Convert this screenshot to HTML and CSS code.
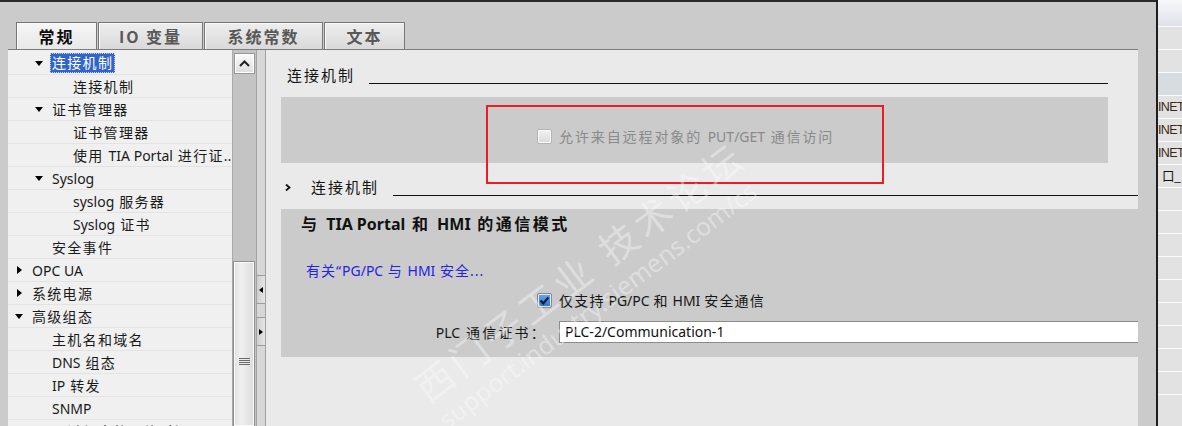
FILE: index.html
```html
<!DOCTYPE html>
<html lang="zh-CN">
  <head>
    <meta charset="UTF-8" />
    <title>常规 - 连接机制</title>
    <link rel="stylesheet" href="styles.css">
  </head>
  <body>
    <div class="window">
      <div class="editor">
        <div class="tabs">
          <div class="tab active">常规</div>
          <div class="tab wide">IO 变量</div>
          <div class="tab wider">系统常数</div>
          <div class="tab">文本</div>
        </div>

        <div class="panel">
          <!-- 导航树 -->
          <div class="tree">
            <div class="row l2"><i class="tri down"></i><span class="sel">连接机制</span></div>
            <div class="row l3">连接机制</div>
            <div class="row l2"><i class="tri down"></i>证书管理器</div>
            <div class="row l3">证书管理器</div>
            <div class="row l3">使用 <span class="lat">TIA Portal</span> 进行证<span class="lat">...</span></div>
            <div class="row l2"><i class="tri down"></i><span class="lat">Syslog</span></div>
            <div class="row l3"><span class="lat">syslog</span> 服务器</div>
            <div class="row l3"><span class="lat">Syslog</span> 证书</div>
            <div class="row l2"><i class="tri"></i>安全事件</div>
            <div class="row l1"><i class="tri right"></i><span class="lat">OPC UA</span></div>
            <div class="row l1"><i class="tri right"></i>系统电源</div>
            <div class="row l1"><i class="tri down"></i>高级组态</div>
            <div class="row l2"><i class="tri"></i>主机名和域名</div>
            <div class="row l2"><i class="tri"></i><span class="lat">DNS</span> 组态</div>
            <div class="row l2"><i class="tri"></i><span class="lat">IP</span> 转发</div>
            <div class="row l2"><i class="tri"></i><span class="lat">SNMP</span></div>
            <div class="row l2"><i class="tri"></i>通过组态的网络时间</div>
          </div>

          <div class="vscroll">
            <div class="up">
              <svg width="11" height="7" viewBox="0 0 11 7"><path d="M1 6 L5.5 1.5 L10 6" fill="none" stroke="#222" stroke-width="2"/></svg>
            </div>
            <div class="track"></div>
            <div class="thumb">
              <div class="grip"><span></span><span></span><span></span><span></span></div>
            </div>
          </div>

          <div class="splitter">
            <div class="split-btn first"><i class="arrow left"></i></div>
            <div class="split-btn"><i class="arrow right"></i></div>
          </div>

          <!-- 属性区域 -->
          <div class="content">
            <div class="section-head first">
              <span class="title">连接机制</span>
              <span class="rule"></span>
            </div>
            <div class="box box-put">
              <div class="check-row disabled">
                <span class="checkbox off"></span>
                <span>允许来自远程对象的 <span class="lat">PUT/GET</span> 通信访问</span>
              </div>
            </div>

            <div class="section-head second">
              <span class="chevron">
                <svg width="6" height="7" viewBox="0 0 6 7"><path d="M1 0.5 L4.5 3.5 L1 6.5" fill="none" stroke="#111" stroke-width="1.8"/></svg>
              </span>
              <span class="title">连接机制</span>
              <span class="rule"></span>
            </div>
            <div class="box box-mode">
              <div class="box-title">与 <span class="lat">TIA Portal</span> 和 <span class="lat">HMI</span> 的通信模式</div>
              <div class="link">有关“<span class="lat">PG/PC</span> 与 <span class="lat">HMI</span> 安全...</div>
              <div class="check-row secure">
                <span class="checkbox on">
                  <svg width="15" height="15" viewBox="0 0 15 15"><path d="M3.5 7.5 L6.3 10.3 L11.5 4.5" fill="none" stroke="#0d1f48" stroke-width="2.2"/></svg>
                </span>
                <span>仅支持 <span class="lat">PG/PC</span> 和 <span class="lat">HMI</span> 安全通信</span>
              </div>
              <div class="field-row">
                <span class="field-label"><span class="lat">PLC</span> 通信证书：</span>
                <div class="field">PLC-2/Communication-1</div>
              </div>
            </div>

            <div class="highlight"></div>
            <div class="watermark">
              <div class="wm-zh">西门子工业 技术论坛</div>
              <div class="wm-url">support.industry.siemens.com/cs</div>
            </div>
          </div>
        </div>
      </div>

      <div class="side">
        <div class="cell head"></div>
        <div class="cell"></div>
        <div class="cell"></div>
        <div class="cell tint"></div>
        <div class="cell txt">INET</div>
        <div class="cell txt">INET</div>
        <div class="cell txt">INET</div>
        <div class="cell txt sq">口_</div>
        <div class="cell"></div>
        <div class="cell"></div>
        <div class="cell"></div>
        <div class="cell"></div>
        <div class="cell"></div>
        <div class="cell"></div>
        <div class="cell"></div>
        <div class="cell"></div>
        <div class="cell"></div>
      </div>
    </div>
  </body>
</html>
```

FILE: styles.css
```css
* {
  margin: 0;
  padding: 0;
  box-sizing: border-box;
}

body {
  font-family: 'Noto Sans', 'Noto Sans CJK SC', sans-serif;
  font-size: 14px;
  color: #161616;
  background: #cbcbcb;
  width: 1182px;
  height: 426px;
  overflow: hidden;
}

.lat {
  letter-spacing: 0;
}

.window {
  display: flex;
  height: 426px;
}

.editor {
  width: 1156px;
  flex-shrink: 0;
  border-top: 2px solid #2a2a2a;
  background: #cbcbcb;
  display: flex;
  flex-direction: column;
}

/* 选项卡 */
.tabs {
  display: flex;
  gap: 1px;
  padding: 20px 0 0 16px;
  height: 47px;
}

.tab {
  width: 81px;
  height: 27px;
  border: 1px solid #767676;
  border-bottom: none;
  background: linear-gradient(#eeeeee, #d9d9d9);
  box-shadow: inset 1px 1px 0 #fafafa;
  font-family: 'Noto Sans CJK SC', sans-serif;
  font-weight: 700;
  font-size: 16px;
  letter-spacing: 2px;
  color: #585858;
  text-align: center;
  line-height: 26px;
}

.tab.wide {
  width: 105px;
}

.tab.wider {
  width: 119px;
}

.tab.active {
  background: linear-gradient(#f6f6f6, #e8e8e8);
  color: #0c0c0c;
}

.panel {
  flex: 1;
  margin-left: 8px;
  width: 1130px;
  border-top: 1px solid #7c7c7c;
  display: flex;
  overflow: hidden;
}

/* 导航树 */
.tree {
  width: 224px;
  background: #f0f0f0;
  padding-top: 2px;
  letter-spacing: 1.3px;
  flex-shrink: 0;
}

.row {
  height: 23px;
  border-bottom: 1px solid #e3e3e3;
  display: flex;
  align-items: center;
  white-space: pre;
  color: #1a1a1a;
}

.row.l1 {
  padding-left: 4px;
}

.row.l2 {
  padding-left: 24px;
}

.row.l3 {
  padding-left: 65px;
}

.tri {
  display: inline-block;
  width: 20px;
  height: 10px;
  position: relative;
  flex-shrink: 0;
}

.tri.down::before {
  content: '';
  position: absolute;
  left: 3px;
  top: 3px;
  border-left: 4.5px solid transparent;
  border-right: 4.5px solid transparent;
  border-top: 5px solid #000;
}

.tri.right::before {
  content: '';
  position: absolute;
  left: 5px;
  top: 0.5px;
  border-top: 4.5px solid transparent;
  border-bottom: 4.5px solid transparent;
  border-left: 5px solid #000;
}

.sel {
  background: #3164c8;
  color: #fff;
  padding: 0 2px 1px 2px;
  margin-left: -2px;
  outline: 1px dotted #c8d4f0;
  outline-offset: -1px;
  line-height: 19px;
}

/* 滚动条 */
.vscroll {
  width: 24px;
  background: #c4c4c4;
  border-left: 1px solid #a9a9a9;
  display: flex;
  flex-direction: column;
  flex-shrink: 0;
}

.vscroll .up {
  height: 21px;
  margin: 3px 1px 0 1px;
  border: 1px solid #979797;
  background: linear-gradient(#fbfbfb, #dedede);
  box-shadow: inset 0 0 0 1px #fff;
  display: flex;
  align-items: center;
  justify-content: center;
}

.vscroll .track {
  height: 187px;
}

.vscroll .thumb {
  flex: 1;
  margin: 0 1px 0 0;
  border: 1px solid #8f8f8f;
  border-bottom: none;
  box-shadow: inset 0 0 0 1px #fbfbfb;
  background: linear-gradient(90deg, #e0e0e0, #f0f0f0 35%, #dcdcdc);
  display: flex;
  justify-content: center;
  padding-top: 96px;
}

.grip {
  display: flex;
  flex-direction: column;
  gap: 1px;
  width: 11px;
}

.grip span {
  height: 1px;
  background: #6a6a6a;
}

.splitter {
  width: 10px;
  background: #d7d7d7;
  border-left: 1px solid #a2a2a2;
  border-right: 1px solid #a2a2a2;
  display: flex;
  flex-direction: column;
  flex-shrink: 0;
}

.split-btn {
  height: 29px;
  border-top: 1px solid #9b9b9b;
  border-bottom: 1px solid #9b9b9b;
  background: linear-gradient(90deg, #cfcfcf, #e6e6e6);
  display: flex;
  align-items: center;
  justify-content: center;
  margin-top: 13px;
}

.split-btn.first {
  margin-top: 225px;
}

.arrow {
  display: block;
  border-top: 3.5px solid transparent;
  border-bottom: 3.5px solid transparent;
}

.arrow.left {
  border-right: 4px solid #000;
}

.arrow.right {
  border-left: 4px solid #000;
}

/* 属性区域 */
.content {
  flex: 1;
  background: #eaeaea;
  position: relative;
  overflow: hidden;
  padding-top: 13px;
}

.section-head {
  display: flex;
  align-items: flex-end;
  height: 24px;
}

.section-head.first {
  margin: 0 30px 0 21px;
}

.section-head.second {
  margin: 12px 0 0 19px;
}

.section-head .title {
  font-size: 15px;
  letter-spacing: 2px;
  line-height: 24px;
  color: #141414;
}

.section-head .rule {
  flex: 1;
  height: 1px;
  background: #111;
  margin: 0 0 3px 14px;
}

.chevron {
  width: 26px;
  height: 24px;
  display: flex;
  align-items: center;
}

.box {
  background: #cbcbcb;
  margin: 10px 30px 0 15px;
}

.box-put {
  height: 66px;
  padding-top: 31px;
}

.check-row {
  display: flex;
  align-items: center;
  gap: 7px;
  padding-left: 256px;
  height: 16px;
  letter-spacing: 1.9px;
  white-space: nowrap;
}

.check-row.disabled {
  color: #8a8a8a;
}

.check-row.secure {
  letter-spacing: 1.2px;
  word-spacing: -1px;
}

.checkbox {
  width: 15px;
  height: 15px;
  border-radius: 2px;
  flex-shrink: 0;
  display: block;
}

.checkbox.off {
  border: 1px solid #b4b4b4;
  background: linear-gradient(#f2f2f2, #dadada);
  box-shadow: inset 0 0 0 1px #fafafa;
}

.checkbox.on {
  border: 1px solid #7b8ea6;
  background: linear-gradient(#6fa6e6, #2f6fc4);
  box-shadow: inset 0 0 0 1px #dfe8f3;
}

.checkbox.on svg {
  display: block;
  margin: -1px;
}

.box-mode {
  margin-right: 0;
  height: 148px;
  padding-top: 4px;
}

.box-title {
  padding-left: 20px;
  font-size: 16px;
  font-weight: 700;
  letter-spacing: 2.5px;
  line-height: 22px;
  color: #111;
}

.link {
  margin-top: 26px;
  padding-left: 25px;
  line-height: 20px;
  color: #2323e6;
  letter-spacing: 1px;
}

.box-mode .check-row {
  margin-top: 11px;
}

.field-row {
  display: flex;
  align-items: center;
  gap: 12px;
  margin-top: 13px;
}

.field-label {
  width: 266px;
  text-align: right;
  letter-spacing: 2.2px;
}

.field {
  flex: 1;
  height: 22px;
  background: #fff;
  border: 1px solid #8c8c8c;
  border-right: none;
  padding-left: 5px;
  line-height: 20px;
  color: #111;
}

.highlight {
  position: absolute;
  left: 220px;
  top: 55px;
  width: 398px;
  height: 79px;
  border: 2px solid #ec1c24;
}

.watermark {
  position: absolute;
  left: 140px;
  top: 325px;
  transform: rotate(-37deg);
  transform-origin: left top;
  color: rgba(255, 255, 255, 0.38);
  white-space: nowrap;
  pointer-events: none;
}

.wm-zh {
  font-size: 38px;
  letter-spacing: 5px;
  line-height: 44px;
}

.wm-url {
  font-size: 25px;
  line-height: 30px;
}

/* 右侧表格 */
.side {
  flex: 1;
  min-width: 0;
  border-left: 2px solid #1e1e1e;
  background: #e2e2e2;
  display: flex;
  flex-direction: column;
}

.cell {
  height: 23px;
  border-bottom: 1px solid #fbfbfb;
  flex-shrink: 0;
  font-family: 'Liberation Sans', sans-serif;
  font-size: 12.5px;
  letter-spacing: -0.6px;
  line-height: 22px;
  color: #3b2812;
  white-space: nowrap;
  overflow: hidden;
}

.cell.head {
  height: 27px;
  background: linear-gradient(#f7f7fa, #dfe2e8);
}

.cell.tint {
  background: #d7dce0;
}

.cell.sq {
  font-family: 'Noto Sans CJK SC', sans-serif;
  color: #111;
  padding-left: 4px;
}
```
